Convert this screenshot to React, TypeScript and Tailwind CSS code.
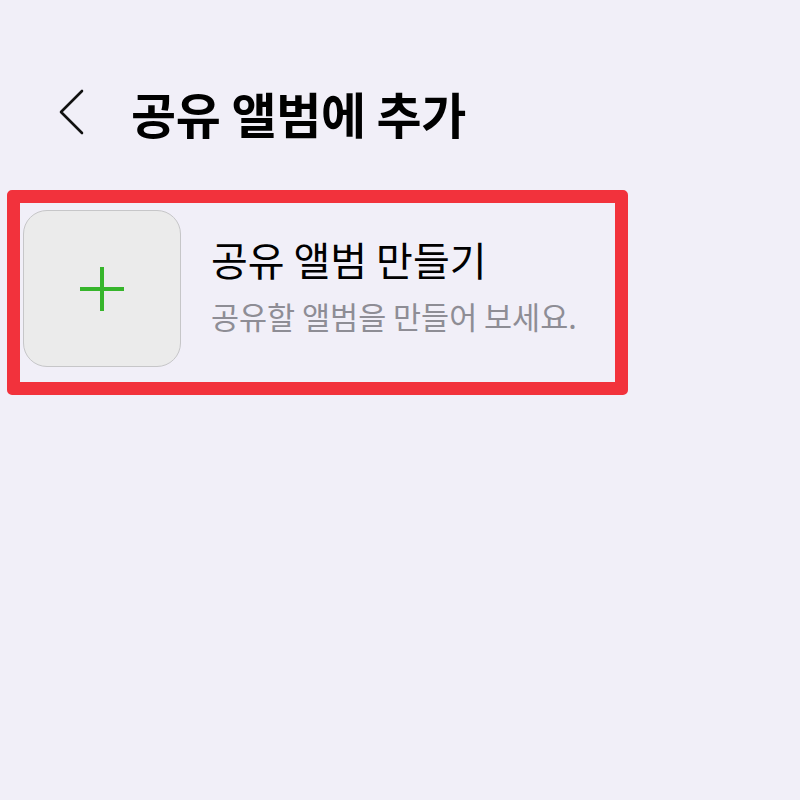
export default function App() {
  return (
    <div
      className="w-[800px] h-[800px] bg-[#f1eff8] flex flex-col"
      style={{ fontFamily: '"Noto Sans CJK KR", "Noto Sans", sans-serif' }}
    >
      <header className="flex items-center h-[80px] mt-[72px]">
        <button className="ml-[58px] w-[28px] h-[46px] flex items-center justify-center">
          <svg width="28" height="46" viewBox="0 0 28 46" fill="none">
            <path d="M24 2 L3 23 L24 44" stroke="#111" strokeWidth="2.6" strokeLinecap="round" strokeLinejoin="round" />
          </svg>
        </button>
        <h1 className="ml-[45px] text-[49px] font-bold text-black leading-none tracking-[-0.3px]">공유 앨범에 추가</h1>
      </header>

      <div className="mt-[38px] ml-[7px] w-[621px] h-[205px] border-[13px] border-[#f2323c] rounded-[5px] flex items-start pl-[3px] pt-[7px]">
        <div className="w-[158px] h-[157px] rounded-[24px] bg-[#ebebeb] border border-[#c6c6c8] flex items-center justify-center">
          <svg width="46" height="46" viewBox="0 0 46 46">
            <path d="M23 1 V45 M1 23 H45" stroke="#36b52b" strokeWidth="4" />
          </svg>
        </div>
        <div className="ml-[30px] flex flex-col mt-[29px]">
          <div className="text-[40px] leading-none text-black">공유 앨범 만들기</div>
          <div className="mt-[22px] text-[30.5px] leading-none text-[#8e8d95]">공유할 앨범을 만들어 보세요.</div>
        </div>
      </div>
    </div>
  );
}
